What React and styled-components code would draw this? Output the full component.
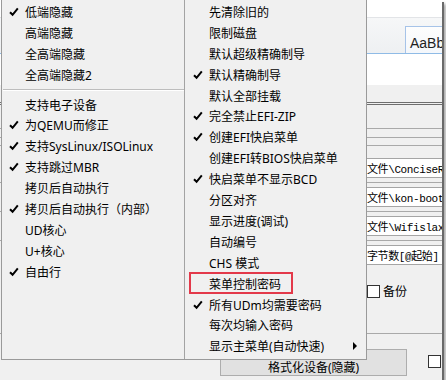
import React from "react";
import styled, { createGlobalStyle } from "styled-components";

const GlobalStyle = createGlobalStyle`
  body {
    margin: 0;
    background: #ffffff;
  }
`;

const Frame = styled.div`
  position: relative;
  width: 442px;
  height: 380px;
  overflow: hidden;
  background: #f0f0f0;
  box-shadow: 2px 2px 0 #6a6a6a, 4px 4px 3px rgba(0, 0, 0, 0.35);
  font-family: "Noto Sans", "Noto Sans CJK SC", sans-serif;
`;

/* ---------- the window behind the menu ---------- */

const Behind = styled.div`
  display: flex;
  flex-direction: column;
  height: 100%;
`;

const RibbonTop = styled.div`
  height: 17px;
  background: #ffffff;
  border-bottom: 1px solid #e2e4e7;
`;

const RibbonBody = styled.div`
  height: 35px;
  display: flex;
  align-items: flex-end;
  padding-left: 405px;
  background: linear-gradient(#f6f7f8, #eef0f2);
  border-bottom: 1px solid #8fbbe6;
`;

const StyleBox = styled.div`
  flex: none;
  width: 60px;
  height: 27px;
  box-sizing: border-box;
  border: 1px solid #a6c3e8;
  border-bottom: none;
  background: linear-gradient(#fdfdfd, #f4f7fb);
  padding: 8px 0 0 4px;
  font-family: "Liberation Sans", sans-serif;
  font-size: 14px;
  line-height: 16px;
  color: #1e1e1e;
`;

const WhiteBand = styled.div`
  height: 31px;
  background: #ffffff;
`;

const GrayBand = styled.div`
  height: 17px;
  border-bottom: 3px double #6e6e6e;
`;

const FormArea = styled.div`
  display: flex;
  flex-direction: column;
  padding-left: 360px;
`;

const Rule = styled.div`
  height: 1px;
  margin-top: ${(p) => p.$gap}px;
  margin-left: ${(p) => (p.$full ? -360 : 0)}px;
  background: #a9a9a9;
`;

const Field = styled.div`
  width: 200px;
  height: 20px;
  margin-top: ${(p) => p.$gap}px;
  box-sizing: border-box;
  display: flex;
  align-items: center;
  padding-left: 6px;
  background: #ffffff;
  border: 1px solid #a5a5a5;
  font-family: "Liberation Mono", "Noto Sans CJK SC", monospace;
  font-size: 11px;
  letter-spacing: -0.4px;
  color: #000;
  white-space: nowrap;
`;

const CheckRow = styled.label`
  display: flex;
  align-items: center;
  gap: 3px;
  margin: ${(p) => p.$gap}px 0 0 7px;
  font-size: 12px;
  color: #000;
`;

const Box = styled.span`
  flex: none;
  width: 13px;
  height: 13px;
  box-sizing: border-box;
  border: 1px solid #333;
  background: #ffffff;
`;

const BottomRow = styled.div`
  display: flex;
  align-items: flex-start;
  padding: 15px 0 0 220px;
`;

const Button = styled.div`
  flex: none;
  width: 187px;
  height: 27px;
  box-sizing: border-box;
  border: 1px solid #adadad;
  background: #e1e1e1;
  display: flex;
  align-items: flex-end;
  justify-content: center;
  padding-bottom: 1px;
  font-size: 12px;
  line-height: 13px;
  color: #000;
`;

const SmallBox = styled(Box)`
  margin: 6px 0 0 21px;
`;

/* ---------- the context menu ---------- */

const Menu = styled.div`
  position: absolute;
  left: 1px;
  top: -1px;
  display: flex;
  background: #f0f0f0;
  border: 1px solid #9a9a9a;
  font-size: 12px;
  color: #000;
`;

const Column = styled.div`
  width: ${(p) => p.$width}px;
  padding: 1.6px 0 2px;
  border-left: ${(p) => (p.$divided ? "1px solid #a3a3a3" : "none")};
`;

const Item = styled.div`
  position: relative;
  height: 20.9px;
  display: flex;
  align-items: center;
  padding-left: ${(p) => p.$indent}px;
  white-space: nowrap;

  ${(p) =>
    p.$marked &&
    `
    &::after {
      content: "";
      position: absolute;
      left: 4px;
      top: -1px;
      width: 104px;
      height: 22px;
      box-sizing: border-box;
      border: 2px solid #e3394a;
    }
  `}
`;

const CheckCell = styled.span`
  flex: none;
  width: 16px;
  height: 10px;
  display: flex;
  align-items: center;
`;

const Arrow = styled.span`
  margin: 0 9px 0 auto;
  border-top: 4px solid transparent;
  border-bottom: 4px solid transparent;
  border-left: 4px solid #000;
`;

const Separator = styled.div`
  height: 1px;
  margin: 4px 0 3px 1px;
  background: #bdbdbd;
  border-bottom: 1px solid #ffffff;
`;

const Check = () => (
  <svg width="10" height="10" viewBox="0 0 10 10">
    <path
      d="M1 5.2 L3.6 7.8 L8.8 1.4"
      fill="none"
      stroke="#000"
      strokeWidth="2"
    />
  </svg>
);

const leftTop = [
  ["低端隐藏", true],
  ["高端隐藏", false],
  ["全高端隐藏", false],
  ["全高端隐藏2", false],
];

const leftBottom = [
  ["支持电子设备", false],
  ["为QEMU而修正", true],
  ["支持SysLinux/ISOLinux", true],
  ["支持跳过MBR", true],
  ["拷贝后自动执行", false],
  ["拷贝后自动执行（内部）", true],
  ["UD核心", false],
  ["U+核心", false],
  ["自由行", true],
];

const rightItems = [
  ["先清除旧的", false],
  ["限制磁盘", false],
  ["默认超级精确制导", false],
  ["默认精确制导", true],
  ["默认全部挂载", false],
  ["完全禁止EFI-ZIP", true],
  ["创建EFI快启菜单", true],
  ["创建EFI转BIOS快启菜单", false],
  ["快启菜单不显示BCD", true],
  ["分区对齐", false],
  ["显示进度(调试)", false],
  ["自动编号", false],
  ["CHS 模式", false],
  ["菜单控制密码", false, "marked"],
  ["所有UDm均需要密码", true],
  ["每次均输入密码", false],
  ["显示主菜单(自动快速)", false, "submenu"],
];

const MenuItem = ({ label, checked, indent, extra }) => (
  <Item $indent={indent} $marked={extra === "marked"}>
    <CheckCell>{checked && <Check />}</CheckCell>
    {label}
    {extra === "submenu" && <Arrow />}
  </Item>
);

const App = () => (
  <Frame>
    <GlobalStyle />
    <Behind>
      <RibbonTop />
      <RibbonBody>
        <StyleBox>AaBbCc</StyleBox>
      </RibbonBody>
      <WhiteBand />
      <GrayBand />
      <FormArea>
        <Rule $gap={23} $full />
        <Rule $gap={8} $full />
        <Rule $gap={7} $full />
        <Field $gap={12}>文件\ConciseRecovery</Field>
        <Rule $gap={4} $full />
        <Field $gap={4}>文件\kon-boot</Field>
        <Rule $gap={4} $full />
        <Field $gap={4}>文件\Wifislax</Field>
        <Rule $gap={4} $full />
        <Field $gap={4}>字节数[@起始]</Field>
        <CheckRow $gap={17}>
          <Box />
          备份
        </CheckRow>
        <Rule $gap={33} $full />
      </FormArea>
      <BottomRow>
        <Button>格式化设备(隐藏)</Button>
        <SmallBox />
      </BottomRow>
    </Behind>

    <Menu>
      <Column $width={182}>
        {leftTop.map(([label, checked]) => (
          <MenuItem key={label} label={label} checked={checked} indent={7} />
        ))}
        <Separator />
        {leftBottom.map(([label, checked]) => (
          <MenuItem key={label} label={label} checked={checked} indent={7} />
        ))}
      </Column>
      <Column $width={181} $divided>
        {rightItems.map(([label, checked, extra]) => (
          <MenuItem
            key={label}
            label={label}
            checked={checked}
            extra={extra}
            indent={8}
          />
        ))}
      </Column>
    </Menu>
  </Frame>
);

export default App;
